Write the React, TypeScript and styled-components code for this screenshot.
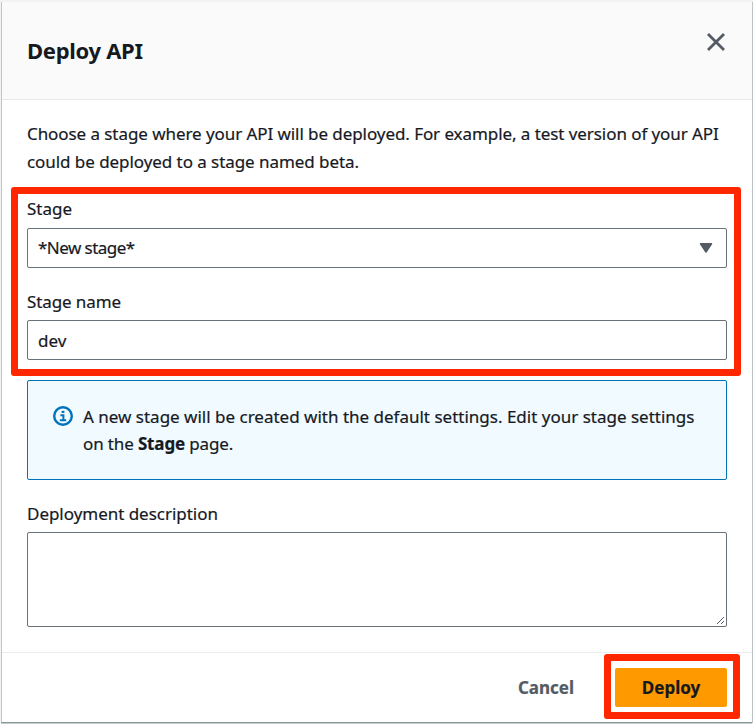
import React from "react";
import styled, { createGlobalStyle } from "styled-components";

const GlobalStyle = createGlobalStyle`
  *, *::before, *::after { box-sizing: border-box; }
  body { margin: 0; background: #f2f3f3; }
`;

const Backdrop = styled.div`
  width: 753px;
  height: 724px;
  padding: 2px 1px 0 1px;
  overflow: hidden;
  background: #f2f3f3;
  font-family: "Noto Sans", "Open Sans", sans-serif;
  font-size: 17px;
  color: #16191f;
`;

const Dialog = styled.section`
  position: relative;
  display: flex;
  flex-direction: column;
  height: 721px;
  border: solid #bcc4c7;
  border-width: 0 0 1px 1px;
  border-bottom-color: #879596;
  box-shadow: 1px 0 0 #bcc4c7, 0 1px 0 #c6cccd;
  background: #fff;
`;

const Header = styled.header`
  display: flex;
  justify-content: space-between;
  height: 98px;
  padding: 0 25px;
  border-bottom: 1px solid #e6e9e9;
  background: #fafafa;
`;

const Title = styled.h1`
  margin: 31px 0 0;
  font-size: 22px;
  line-height: 34px;
  font-weight: 700;
  letter-spacing: -0.3px;
`;

const CloseButton = styled.button`
  width: 22px;
  height: 22px;
  margin-top: 29px;
  padding: 0;
  border: 0;
  background: none;
  color: #545b64;
  svg { display: block; }
`;

const Text = styled.span<{ $track?: number }>`
  display: block;
  white-space: nowrap;
  letter-spacing: ${(p) => p.$track ?? 0}px;
  -webkit-text-stroke: 0.2px currentColor;
`;

const Body = styled.div`
  flex: 1;
  padding: 20px 25px 0;
`;

const Intro = styled.div`
  height: 77px;
  line-height: 28px;
`;

const Field = styled.div<{ $height: number }>`
  height: ${(p) => p.$height}px;
`;

const Label = styled.label<{ $height?: number }>`
  display: block;
  height: ${(p) => p.$height ?? 31}px;
  line-height: 24px;
`;

const Control = styled.div<{ $inset?: number }>`
  display: flex;
  align-items: center;
  justify-content: space-between;
  height: 40px;
  padding: ${(p) => p.$inset ?? 0}px 13px 0 10px;
  border: 1px solid #687078;
  border-radius: 2px;
  background: #fff;
  line-height: 22px;
`;

const Alert = styled.div`
  display: flex;
  gap: 10px;
  height: 100px;
  margin-bottom: 22px;
  padding: 22px 25px;
  border: 1px solid #0073bb;
  border-radius: 2px;
  background: #f1faff;
  line-height: 27px;
  svg { flex: none; margin-top: 3px; }
`;

const Area = styled.div`
  display: flex;
  align-items: flex-end;
  justify-content: flex-end;
  height: 95px;
  padding: 1px;
  border: 1px solid #687078;
  border-radius: 2px;
`;

const Footer = styled.footer`
  display: flex;
  justify-content: flex-end;
  height: 70px;
  padding: 15px 25px 0;
  border-top: 1px solid #eaeded;
`;

const Button = styled.button<{ $primary?: boolean }>`
  display: flex;
  align-items: center;
  justify-content: center;
  width: ${(p) => (p.$primary ? 112 : 138)}px;
  height: 39px;
  padding: 0;
  border: 0;
  border-radius: 2px;
  background: ${(p) => (p.$primary ? "#ff9900" : "transparent")};
  color: ${(p) => (p.$primary ? "#16191f" : "#545b64")};
  font: inherit;
  font-weight: 700;
`;

const Highlight = styled.div<{ $x: number; $y: number; $w: number; $h: number }>`
  position: absolute;
  left: ${(p) => p.$x}px;
  top: ${(p) => p.$y}px;
  width: ${(p) => p.$w}px;
  height: ${(p) => p.$h}px;
  border: 7px solid #ff2600;
  border-radius: 3px;
  pointer-events: none;
`;

export default function App() {
  return (
    <Backdrop>
      <GlobalStyle />
      <Dialog>
        <Header>
          <Title>Deploy API</Title>
          <CloseButton aria-label="Close">
            <svg width="22" height="22" viewBox="0 0 22 22" fill="none" stroke="currentColor" strokeWidth="2.8">
              <path d="M3 3l16 16M19 3L3 19" />
            </svg>
          </CloseButton>
        </Header>
        <Body>
          <Intro>
            <Text $track={-0.07}>Choose a stage where your API will be deployed. For example, a test version of your API</Text>
            <Text $track={-0.06}>could be deployed to a stage named beta.</Text>
          </Intro>
          <Field $height={93}>
            <Label><Text>Stage</Text></Label>
            <Control>
              <Text $track={-0.55}>*New stage*</Text>
              <svg width="14" height="12" viewBox="0 0 14 12" fill="#545b64" stroke="#545b64" strokeWidth="1.5" strokeLinejoin="round">
                <path d="M1.5 1.8h11L7 10z" />
              </svg>
            </Control>
          </Field>
          <Field $height={90}>
            <Label $height={30}><Text $track={-0.1}>Stage name</Text></Label>
            <Control $inset={2}><Text>dev</Text></Control>
          </Field>
          <Alert>
            <svg width="20" height="20" viewBox="0 0 20 20" fill="none" stroke="#0073bb" strokeWidth="2">
              <circle cx="10" cy="10" r="8.8" strokeWidth="2.4" />
              <path d="M8.6 5.9h2.8" strokeWidth="2.2" />
              <path d="M7.4 9.3h3v5M6.9 14.2h6.3" />
            </svg>
            <div>
              <Text>A new stage will be created with the default settings. Edit your stage settings</Text>
              <Text $track={-0.14}>on the <b>Stage</b> page.</Text>
            </div>
          </Alert>
          <Field $height={125}>
            <Label $height={30}><Text $track={-0.03}>Deployment description</Text></Label>
            <Area>
              <svg width="9" height="9" viewBox="0 0 9 9" stroke="#545b64" strokeWidth="1">
                <path d="M1 8L8 1M5 8l3-3" />
              </svg>
            </Area>
          </Field>
        </Body>
        <Footer>
          <Button><Text>Cancel</Text></Button>
          <Button $primary><Text>Deploy</Text></Button>
        </Footer>
        <Highlight $x={9} $y={185} $w={730} $h={189} />
        <Highlight $x={602} $y={652} $w={136} $h={65} />
      </Dialog>
    </Backdrop>
  );
}
